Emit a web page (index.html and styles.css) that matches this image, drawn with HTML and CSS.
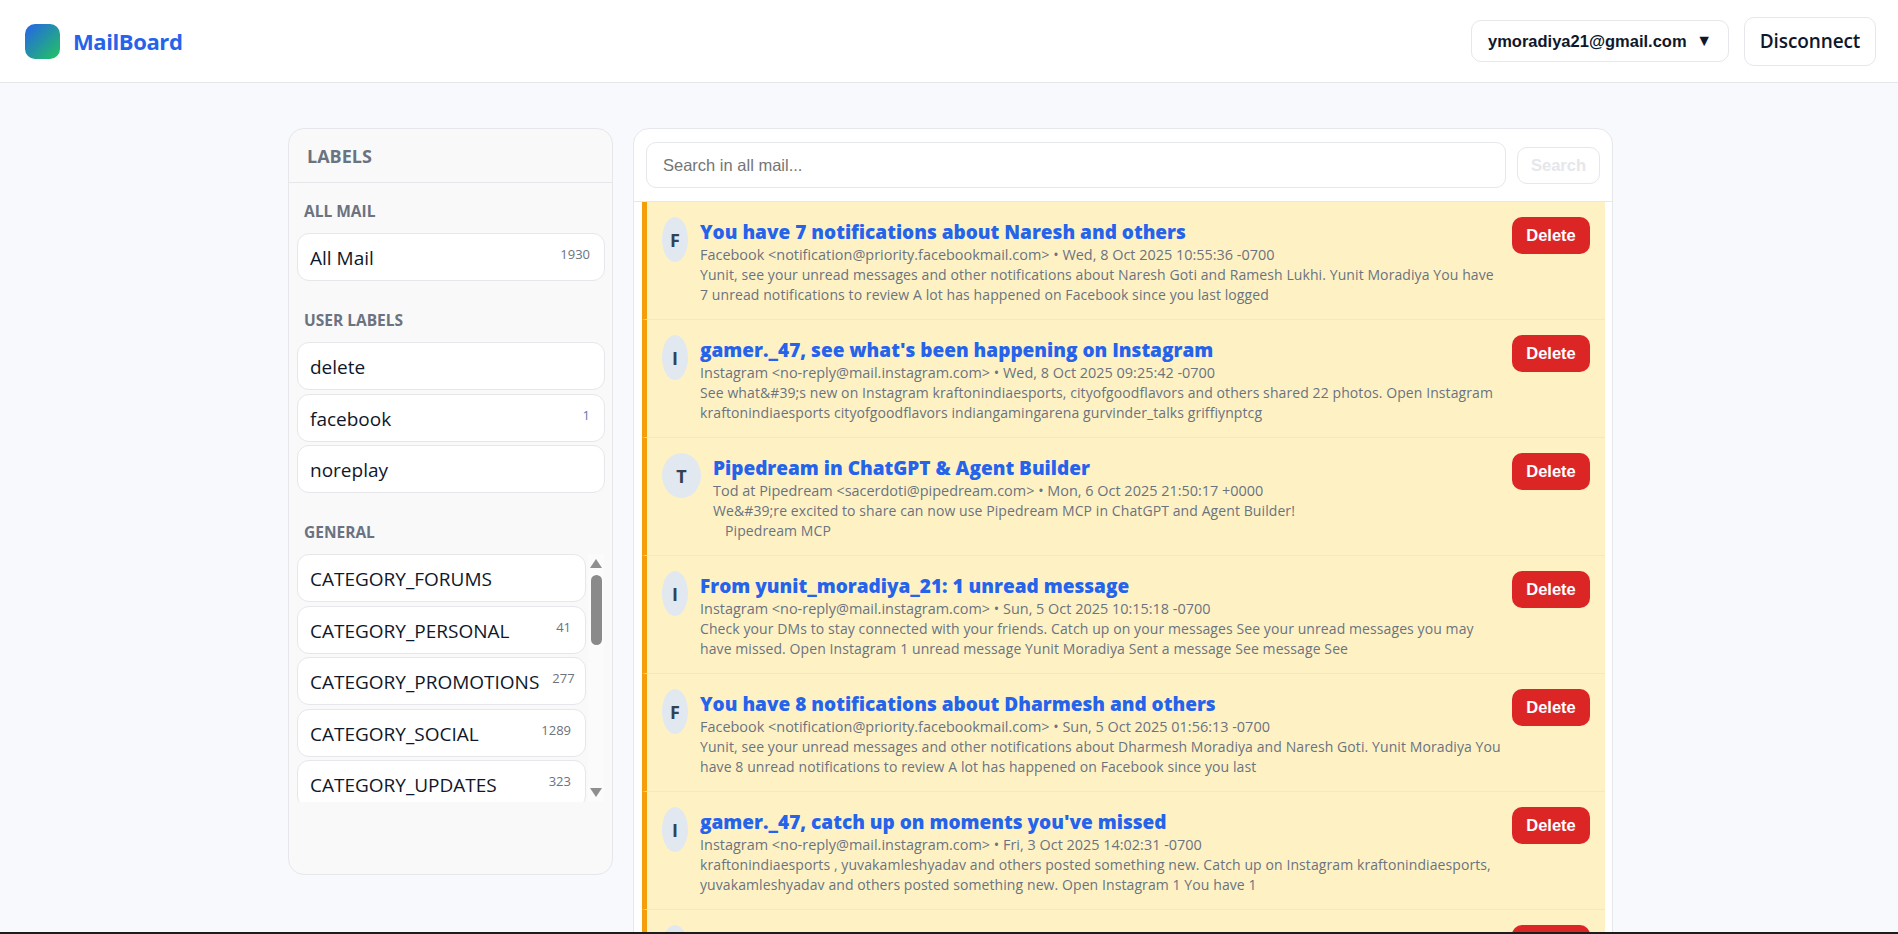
FILE: index.html
```html
<!DOCTYPE html>
<html lang="en">
<head>
  <meta charset="UTF-8">
  <meta name="viewport" content="width=device-width, initial-scale=1.0">
  <title>MailBoard</title>
  <link rel="stylesheet" href="styles.css">
</head>
<body>
  <header class="topbar">
    <div class="brand">
      <div class="brand-logo"></div>
      <span class="brand-name">MailBoard</span>
    </div>
    <div class="topbar-actions">
      <button class="account-btn"><span>ymoradiya21@gmail.com</span><span class="account-caret">▼</span></button>
      <button class="disconnect-btn">Disconnect</button>
    </div>
  </header>

  <div class="layout">
    <aside class="sidebar">
      <div class="sidebar-title">LABELS</div>

      <section class="label-group">
        <h4 class="group-title">ALL MAIL</h4>
        <div class="label-item"><span>All Mail</span><span class="label-count">1930</span></div>
      </section>

      <section class="label-group">
        <h4 class="group-title">USER LABELS</h4>
        <div class="label-item"><span>delete</span></div>
        <div class="label-item"><span>facebook</span><span class="label-count unread">1</span></div>
        <div class="label-item"><span>noreplay</span></div>
      </section>

      <section class="label-group">
        <h4 class="group-title">GENERAL</h4>
        <div class="label-scroll">
          <div class="label-scroll-list">
            <div class="label-item"><span>CATEGORY_FORUMS</span></div>
            <div class="label-item"><span>CATEGORY_PERSONAL</span><span class="label-count">41</span></div>
            <div class="label-item"><span>CATEGORY_PROMOTIONS</span><span class="label-count">277</span></div>
            <div class="label-item"><span>CATEGORY_SOCIAL</span><span class="label-count">1289</span></div>
            <div class="label-item"><span>CATEGORY_UPDATES</span><span class="label-count">323</span></div>
          </div>
          <div class="scroll-track">
            <div class="scroll-up"></div>
            <div class="scroll-thumb"></div>
            <div class="scroll-down"></div>
          </div>
        </div>
      </section>
    </aside>

    <main class="mail-panel">
      <form class="search-row">
        <input class="search-input" type="text" placeholder="Search in all mail...">
        <button class="search-btn" type="button">Search</button>
      </form>

      <div class="mail-list">
        <article class="mail-row">
          <div class="avatar">F</div>
          <div class="mail-body">
            <div class="mail-subject">You have 7 notifications about Naresh and others</div>
            <div class="mail-meta">Facebook &lt;notification@priority.facebookmail.com&gt; • Wed, 8 Oct 2025 10:55:36 -0700</div>
            <div class="mail-snippet">Yunit, see your unread messages and other notifications about Naresh Goti and Ramesh Lukhi. Yunit Moradiya You have<br>7 unread notifications to review A lot has happened on Facebook since you last logged</div>
          </div>
          <button class="delete-btn">Delete</button>
        </article>

        <article class="mail-row">
          <div class="avatar">I</div>
          <div class="mail-body">
            <div class="mail-subject">gamer._47, see what's been happening on Instagram</div>
            <div class="mail-meta">Instagram &lt;no-reply@mail.instagram.com&gt; • Wed, 8 Oct 2025 09:25:42 -0700</div>
            <div class="mail-snippet">See what&amp;#39;s new on Instagram kraftonindiaesports, cityofgoodflavors and others shared 22 photos. Open Instagram<br>kraftonindiaesports cityofgoodflavors indiangamingarena gurvinder_talks griffiynptcg</div>
          </div>
          <button class="delete-btn">Delete</button>
        </article>

        <article class="mail-row">
          <div class="avatar avatar-full">T</div>
          <div class="mail-body">
            <div class="mail-subject">Pipedream in ChatGPT &amp; Agent Builder</div>
            <div class="mail-meta">Tod at Pipedream &lt;sacerdoti@pipedream.com&gt; • Mon, 6 Oct 2025 21:50:17 +0000</div>
            <div class="mail-snippet">We&amp;#39;re excited to share can now use Pipedream MCP in ChatGPT and Agent Builder!<br><span class="snippet-indent">Pipedream MCP</span></div>
          </div>
          <button class="delete-btn">Delete</button>
        </article>

        <article class="mail-row">
          <div class="avatar">I</div>
          <div class="mail-body">
            <div class="mail-subject">From yunit_moradiya_21: 1 unread message</div>
            <div class="mail-meta">Instagram &lt;no-reply@mail.instagram.com&gt; • Sun, 5 Oct 2025 10:15:18 -0700</div>
            <div class="mail-snippet">Check your DMs to stay connected with your friends. Catch up on your messages See your unread messages you may<br>have missed. Open Instagram 1 unread message Yunit Moradiya Sent a message See message See</div>
          </div>
          <button class="delete-btn">Delete</button>
        </article>

        <article class="mail-row">
          <div class="avatar">F</div>
          <div class="mail-body">
            <div class="mail-subject">You have 8 notifications about Dharmesh and others</div>
            <div class="mail-meta">Facebook &lt;notification@priority.facebookmail.com&gt; • Sun, 5 Oct 2025 01:56:13 -0700</div>
            <div class="mail-snippet">Yunit, see your unread messages and other notifications about Dharmesh Moradiya and Naresh Goti. Yunit Moradiya You<br>have 8 unread notifications to review A lot has happened on Facebook since you last</div>
          </div>
          <button class="delete-btn">Delete</button>
        </article>

        <article class="mail-row">
          <div class="avatar">I</div>
          <div class="mail-body">
            <div class="mail-subject">gamer._47, catch up on moments you've missed</div>
            <div class="mail-meta">Instagram &lt;no-reply@mail.instagram.com&gt; • Fri, 3 Oct 2025 14:02:31 -0700</div>
            <div class="mail-snippet">kraftonindiaesports , yuvakamleshyadav and others posted something new. Catch up on Instagram kraftonindiaesports,<br>yuvakamleshyadav and others posted something new. Open Instagram 1 You have 1</div>
          </div>
          <button class="delete-btn">Delete</button>
        </article>

        <article class="mail-row">
          <div class="avatar">I</div>
          <div class="mail-body"></div>
          <button class="delete-btn">Delete</button>
        </article>
      </div>
    </main>
  </div>

  <div class="window-edge"></div>
</body>
</html>
```

FILE: styles.css
```css
* {
  box-sizing: border-box;
}
html, body {
  margin: 0;
  padding: 0;
  height: 100%;
  overflow: hidden;
  background: #f8f9fc;
  color: #0f172a;
  font-family: 'Open Sans', sans-serif;
}
button {
  cursor: pointer;
}

/* top bar */
.topbar {
  height: 83px;
  background: #fff;
  border-bottom: 1px solid #e5e7eb;
  display: flex;
  align-items: center;
  justify-content: space-between;
  padding: 0 22px 0 25px;
}
.brand {
  display: flex;
  align-items: center;
  gap: 13px;
}
.brand-logo {
  width: 35px;
  height: 35px;
  border-radius: 10px;
  background: linear-gradient(135deg, #2563eb, #22c55e);
}
.brand-name {
  font-size: 22px;
  font-weight: 700;
  letter-spacing: -0.4px;
  color: #2563eb;
}
.topbar-actions {
  display: flex;
  align-items: center;
  gap: 15px;
}
.account-btn {
  height: 42px;
  width: 258px;
  display: flex;
  align-items: center;
  justify-content: space-between;
  padding: 0 16px;
  background: #fff;
  border: 1px solid #e5e7eb;
  border-radius: 10px;
  color: #0f172a;
  font-family: 'Liberation Sans', sans-serif;
  font-size: 16.5px;
  font-weight: 700;
}
.account-caret {
  font-size: 16px;
}
.disconnect-btn {
  height: 49px;
  width: 132px;
  background: #fff;
  border: 1px solid #e5e7eb;
  border-radius: 10px;
  color: #0f172a;
  font-family: 'Open Sans', sans-serif;
  font-size: 19px;
  font-weight: 600;
  letter-spacing: -0.1px;
}

/* page columns */
.layout {
  display: grid;
  grid-template-columns: 325px 980px;
  gap: 20px;
  align-items: start;
  padding: 45px 0 0 288px;
}

/* labels */
.sidebar {
  height: 747px;
  background: #f9f9f9;
  border: 1px solid #e5e7eb;
  border-radius: 16px;
  padding: 0 7px 0 8px;
}
.sidebar-title {
  height: 54px;
  margin: 0 -7px 0 -8px;
  padding-left: 18px;
  padding-top: 1px;
  border-bottom: 1px solid #e5e7eb;
  display: flex;
  align-items: center;
  color: #6b7280;
  font-size: 18px;
  font-weight: 700;
}
.label-group {
  margin-top: 29px;
}
.label-group:first-of-type {
  margin-top: 18px;
}
.group-title {
  margin: 0 0 12px 7px;
  height: 20px;
  line-height: 20px;
  color: #6b7280;
  font-size: 15.5px;
  font-weight: 700;
}
.label-item {
  height: 48px;
  margin-bottom: 3.5px;
  padding: 2px 14px 0 12px;
  display: flex;
  align-items: center;
  justify-content: space-between;
  gap: 13px;
  background: #fff;
  border: 1px solid #e5e7eb;
  border-radius: 12px;
  font-size: 19px;
  white-space: nowrap;
}
.label-count {
  align-self: flex-start;
  margin-top: 9px;
  color: #6b7280;
  font-size: 13px;
}
.label-count.unread {
  color: #5b7bb0;
}
.label-scroll {
  display: flex;
  height: 248px;
  overflow: hidden;
}
.label-scroll-list {
  width: 289px;
  flex: none;
}
.scroll-track {
  width: 16px;
  margin-left: 2px;
  background: #fbfbfb;
  display: flex;
  flex-direction: column;
  align-items: center;
  padding: 5px 0;
}
.scroll-up, .scroll-down {
  width: 0;
  height: 0;
  border-left: 6px solid transparent;
  border-right: 6px solid transparent;
}
.scroll-up {
  border-bottom: 9px solid #8f8f8f;
}
.scroll-down {
  border-top: 9px solid #8f8f8f;
  margin-top: auto;
}
.scroll-thumb {
  width: 11px;
  height: 70px;
  margin-top: 7px;
  background: #8a8a8a;
  border-radius: 6px;
}

/* mail panel */
.mail-panel {
  height: 900px;
  background: #fff;
  border: 1px solid #e5e7eb;
  border-radius: 16px;
}
.search-row {
  height: 73px;
  border-bottom: 1px solid #e5e7eb;
  display: flex;
  align-items: center;
  gap: 11px;
  padding: 0 12px;
}
.search-input {
  flex: 1;
  height: 46px;
  padding: 0 16px;
  background: #fff;
  border: 1px solid #e5e7eb;
  border-radius: 10px;
  font-family: 'Liberation Sans', sans-serif;
  font-size: 16.5px;
}
.search-input::placeholder {
  color: #757575;
}
.search-btn {
  width: 83px;
  height: 37px;
  background: #fff;
  border: 1px solid #e5e7eb;
  border-radius: 10px;
  color: #e5e7eb;
  font-family: 'Liberation Sans', sans-serif;
  font-size: 16.5px;
  font-weight: 700;
}
.mail-list {
  margin: 0 7px 0 8px;
}
.mail-row {
  height: 118px;
  display: flex;
  align-items: flex-start;
  gap: 12px;
  padding: 15px 15px 0 15px;
  background: #fef2c5;
  border-left: 5px solid #f59e0b;
  border-bottom: 1px solid #e5e7eb;
}
.avatar {
  width: 26px;
  height: 45px;
  flex: none;
  border-radius: 50%;
  background: #e2e8f0;
  color: #334155;
  display: flex;
  align-items: center;
  justify-content: center;
  font-size: 18px;
  font-weight: 700;
}
.avatar-full {
  width: 39px;
}
.mail-body {
  flex: 1;
  min-width: 0;
  padding-top: 3px;
}
.mail-subject {
  height: 25px;
  line-height: 24px;
  color: #2563eb;
  font-size: 19px;
  font-weight: 800;
  white-space: nowrap;
}
.mail-meta, .mail-snippet {
  line-height: 20px;
  color: #6b7280;
  white-space: nowrap;
}
.mail-meta {
  font-size: 14.45px;
}
.mail-snippet {
  font-size: 14px;
  letter-spacing: 0.09px;
}
.snippet-indent {
  margin-left: 12px;
}
.delete-btn {
  flex: none;
  width: 78px;
  height: 37px;
  background: #dc2626;
  border: 0;
  border-radius: 10px;
  color: #fff;
  font-family: 'Liberation Sans', sans-serif;
  font-size: 16.5px;
  font-weight: 700;
}

/* dark line under the capture */
.window-edge {
  position: fixed;
  left: 0;
  right: 0;
  bottom: 0;
  height: 2px;
  background: #1c1c1c;
}
```
